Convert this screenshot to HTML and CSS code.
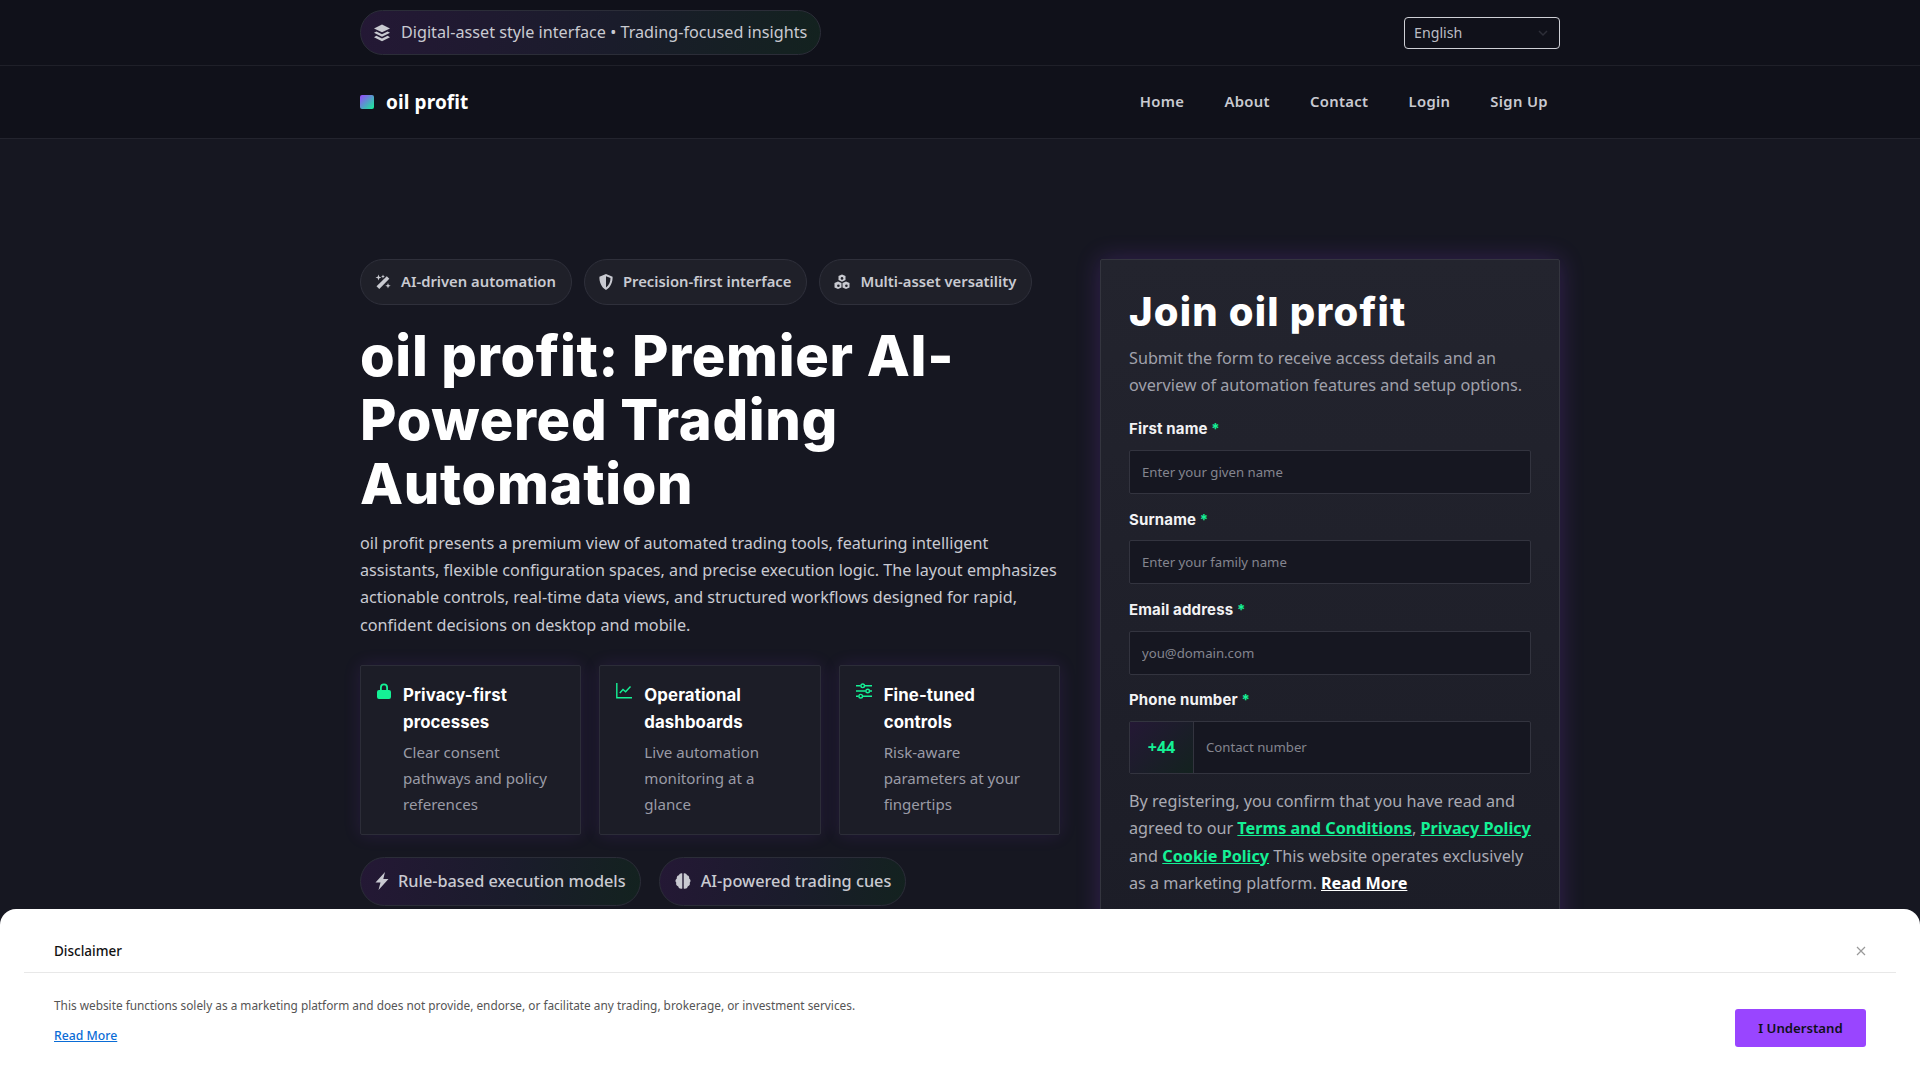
FILE: index.html
```html
<!DOCTYPE html>
<html lang="en">
<head>
<meta charset="utf-8">
<title>oil profit</title>
<link rel="stylesheet" href="styles.css">
</head>
<body>
<header class="topbar">
  <div class="wrap topbar-row">
    <div class="pill pill-top">
      <svg class="ico ico-layers" viewBox="0 0 18 18"><path d="M9 .5 17 4.400 9 8.300 1 4.400Z"/><path d="M3.400 7.400 9 10.200 14.600 7.400 17 8.800 9 12.700 1 8.800Z"/><path d="M3.400 11.800 9 14.500 14.600 11.800 17 13.200 9 17.200 1 13.200Z"/></svg>
      <span>Digital-asset style interface • Trading-focused insights</span>
    </div>
    <div class="lang">
      <span>English</span>
      <svg class="lang-caret" viewBox="0 0 12 12"><path d="M2 4l4 4 4-4"/></svg>
    </div>
  </div>
</header>
<nav class="navbar">
  <div class="wrap nav-row">
    <a class="brand"><span class="brand-mark"></span><span>oil profit</span></a>
    <div class="nav-links">
      <a>Home</a><a>About</a><a>Contact</a><a>Login</a><a>Sign Up</a>
    </div>
  </div>
</nav>
<main class="wrap hero">
  <section class="left">
    <div class="chips">
      <span class="chip"><svg class="ico" viewBox="0 0 16 16"><path d="M11.800 2.200 14.300 4.700 4.300 15 1.500 12.300Z"/><path d="M3.500.5 4.300 2.700 6.500 3.500 4.300 4.300 3.500 6.500 2.700 4.300.5 3.500 2.700 2.700Z"/><path d="M8 .5 8.600 1.900 10 2.500 8.600 3.100 8 4.500 7.400 3.100 6 2.500 7.400 1.900Z"/><path d="M13 9 13.700 11 15.700 11.700 13.700 12.400 13 14.400 12.300 12.400 10.300 11.700 12.300 11Z"/></svg>AI-driven automation</span>
      <span class="chip"><svg class="ico ico-shield" viewBox="0 0 14 16"><path fill-rule="evenodd" d="M7 0 13.600 2.700C13.800 7.500 12 13 7 16 2 13 .2 7.500.4 2.700ZM7 2.300V13.500C10.200 11.500 11.500 7.800 11.500 4.100Z"/></svg>Precision-first interface</span>
      <span class="chip"><svg class="ico" viewBox="0 0 16 16"><path d="M8 .5 11.500 2V6L8 7.700 4.500 6V2Z"/><path d="M4 7.600 7.500 9.100V13.400L4 15 .5 13.400V9.100Z"/><path d="M12 7.600 15.500 9.100V13.400L12 15 8.500 13.400V9.100Z"/><circle cx="8" cy="4.400" r="1.300" fill="#1f2029"/><circle cx="4.400" cy="11.800" r="1.300" fill="#1f2029"/><circle cx="12.400" cy="11.800" r="1.300" fill="#1f2029"/></svg>Multi-asset versatility</span>
    </div>
    <h1>oil profit: Premier AI-Powered Trading Automation</h1>
    <p class="lead">oil profit presents a premium view of automated trading tools, featuring intelligent assistants, flexible configuration spaces, and precise execution logic. The layout emphasizes actionable controls, real-time data views, and structured workflows designed for rapid, confident decisions on desktop and mobile.</p>
    <div class="features">
      <article class="feature">
        <svg class="f-ico f-lock" viewBox="0 0 14 16"><path class="solid" d="M3 7V4.500a4 4 0 0 1 8 0V7h1a2 2 0 0 1 2 2v5a2 2 0 0 1-2 2H2a2 2 0 0 1-2-2V9a2 2 0 0 1 2-2ZM4.800 7h4.400V4.500a2.200 2.200 0 0 0-4.400 0Z"/></svg>
        <div><h3>Privacy-first processes</h3><p>Clear consent pathways and policy references</p></div>
      </article>
      <article class="feature">
        <svg class="f-ico" viewBox="0 0 16 16"><path class="line" d="M.8 0v14.700H16M3.800 10l3.200-3.500 2.600 2.200L14.500 3.500"/></svg>
        <div><h3>Operational dashboards</h3><p>Live automation monitoring at a glance</p></div>
      </article>
      <article class="feature">
        <svg class="f-ico" viewBox="0 0 16 16"><path class="line" d="M0 2.800h4.500M9 2.800h7M0 8h9.500M14 8h2M0 13.200h2.500M7 13.200h9"/><circle class="line" cx="6.700" cy="2.800" r="1.800"/><circle class="line" cx="11.700" cy="8" r="1.800"/><circle class="line" cx="4.700" cy="13.200" r="1.800"/></svg>
        <div><h3>Fine-tuned controls</h3><p>Risk-aware parameters at your fingertips</p></div>
      </article>
    </div>
    <div class="chips chips-low">
      <span class="pill pill-low"><svg class="ico ico-bolt" viewBox="0 0 14 18"><path d="M10 0 .5 10.500H5.500L3.500 18 13.500 7H8.300Z"/></svg>Rule-based execution models</span>
      <span class="pill pill-low"><svg class="ico ico-brain" viewBox="0 0 18 18"><path d="M8.300 1.500V16.500C6.500 17.200 4.600 16.300 4.300 14.500 2.500 14 1.700 12.300 2.300 10.800 1 9.500 1.200 7.300 2.800 6.400 2.500 4.800 3.500 3.300 5 3.200 5.500 1.700 7 1 8.300 1.500Z"/><path d="M9.700 1.500V16.500C11.500 17.200 13.400 16.300 13.700 14.500 15.500 14 16.300 12.300 15.700 10.800 17 9.500 16.800 7.300 15.200 6.400 15.500 4.800 14.500 3.300 13 3.200 12.500 1.700 11 1 9.700 1.500Z"/></svg>AI-powered trading cues</span>
    </div>
  </section>
  <aside class="panel">
    <h2>Join oil profit</h2>
    <p class="panel-sub">Submit the form to receive access details and an overview of automation features and setup options.</p>
    <form class="form">
      <label class="field"><span class="label">First name <em>*</em></span><input class="input" placeholder="Enter your given name"></label>
      <label class="field"><span class="label">Surname <em>*</em></span><input class="input" placeholder="Enter your family name"></label>
      <label class="field"><span class="label">Email address <em>*</em></span><input class="input" placeholder="you@domain.com"></label>
      <label class="field"><span class="label">Phone number <em>*</em></span>
        <span class="phone"><span class="prefix">+44</span><input class="input input-phone" placeholder="Contact number"></span>
      </label>
      <p class="consent">By registering, you confirm that you have read and agreed to our <a>Terms and Conditions</a>, <a>Privacy Policy</a> and <a>Cookie Policy</a> This website operates exclusively as a marketing platform. <a class="more">Read More</a></p>
    </form>
  </aside>
</main>
<div class="modal">
  <div class="modal-head"><span class="modal-title">Disclaimer</span><svg class="modal-x" viewBox="0 0 10 10"><path d="M1 1l8 8M9 1l-8 8"/></svg></div>
  <div class="modal-body">
    <div class="modal-text">
      <p>This website functions solely as a marketing platform and does not provide, endorse, or facilitate any trading, brokerage, or investment services.</p>
      <a>Read More</a>
    </div>
    <button class="modal-btn" type="button">I Understand</button>
  </div>
</div>
</body>
</html>
```
FILE: styles.css
```css
* { box-sizing: border-box; }
html, body { margin: 0; height: 100%; overflow: hidden; }
body { background: #161721; color: #c9cad1; font-family: "Noto Sans", sans-serif; font-size: 16.200px; }
a { cursor: pointer; }
.wrap { width: 1200px; margin: 0 auto; }

.topbar { height: 66px; background: #10111a; border-bottom: 1px solid #1f2029; }
.topbar-row { height: 65px; display: flex; align-items: center; justify-content: space-between; }
.pill { display: inline-flex; align-items: center; border: 1px solid #2b2d38; border-radius: 999px; background: linear-gradient(100deg, #241835, #1a1c2b 55%, #13221f); color: #c9cad1; }
.pill-top { height: 45px; padding: 0 13px 2px 12px; gap: 10px; font-size: 16.200px; }
.pill-top .ico { margin-top: 2px; }
.ico { width: 16px; height: 16px; fill: #c9cad1; flex: none; }
.ico-layers { width: 18px; height: 18px; }
.lang { width: 156px; height: 32px; display: flex; align-items: center; justify-content: space-between; padding: 0 10px 0 9px; border: 1px solid #cfd0d6; border-radius: 4px; font-size: 14.200px; color: #bcbdc5; background: #10111a; }
.lang-caret { width: 12px; height: 12px; fill: none; stroke: #2d2e38; stroke-width: 1.500; }

.navbar { height: 73px; background: #10111a; border-bottom: 1px solid #23242e; }
.nav-row { height: 72px; display: flex; align-items: center; justify-content: space-between; }
.brand { display: flex; align-items: center; gap: 12px; color: #fff; font-size: 19px; font-weight: 700; letter-spacing: .1px; }
.brand-mark { width: 14px; height: 14px; border-radius: 2px; background: linear-gradient(135deg, #9945ff, #14f195); }
.nav-links { display: flex; gap: 16px; margin-top: -2px; }
.nav-links a { padding: 8px 12px; font-size: 14.800px; font-weight: 600; letter-spacing: .35px; color: #c9cad1; }

.hero { display: grid; grid-template-columns: 700px 460px; gap: 40px; padding-top: 120px; }
.chips { display: flex; gap: 12px; }
.chip { display: inline-flex; align-items: center; gap: 10px; height: 46px; padding: 0 15px 2px 14px; border: 1px solid #2f303b; border-radius: 999px; background: #1f2029; color: #c9cad1; font-size: 14.800px; font-weight: 600; }
.chip .ico { margin-top: 2px; }
.ico-shield { width: 14px; }
h1 { margin: 19px 0 14px; font-family: Inter, sans-serif; font-size: 56px; line-height: 64px; font-weight: 800; color: #fff; letter-spacing: .68px; }
.lead { margin: 0; font-size: 16.200px; line-height: 27.200px; color: #c9cad1; }
.features { margin-top: 26px; display: grid; grid-template-columns: repeat(3, 1fr); gap: 18px; }
.feature { display: flex; gap: 12px; height: 170px; padding: 16px; border: 1px solid #2c2d38; border-radius: 2px; background: #1c1d27; box-shadow: 0 0 18px rgba(153, 69, 255, .12); }
.f-ico { width: 16px; height: 16px; flex: none; margin-top: 1px; }
.f-lock { width: 14px; }
.f-ico .solid { fill: #14f195; fill-rule: evenodd; }
.f-ico .line { fill: none; stroke: #14f195; stroke-width: 1.400; }
.feature h3 { margin: 0 0 3px; font-family: Inter, sans-serif; font-size: 16.800px; line-height: 27px; font-weight: 700; color: #fff; letter-spacing: .1px; }
.feature p { margin: 0; font-size: 15.100px; line-height: 26px; color: #9a9ba6; }
.chips-low { margin-top: 22px; gap: 18px; }
.pill-low { height: 49px; padding: 0 14px; gap: 9px; font-size: 16.300px; font-weight: 500; }
.ico-bolt { width: 14px; height: 18px; }
.ico-brain { width: 18px; height: 18px; }

.panel { height: 760px; padding: 28px; border: 1px solid #34353f; border-radius: 2px; background: linear-gradient(180deg, #23242e, #1b1c26); box-shadow: 0 0 24px rgba(153, 69, 255, .22); }
h2 { margin: 0; font-family: Inter, sans-serif; font-size: 40px; line-height: 48px; font-weight: 800; color: #fff; letter-spacing: 1.200px; }
.panel-sub { margin: 9px 0 0; font-size: 16.200px; line-height: 27px; color: #a0a1ab; }
.form { margin-top: 19.400px; display: flex; flex-direction: column; gap: 14.730px; }
.field { display: flex; flex-direction: column; gap: 9.600px; }
.label { font-family: Inter, sans-serif; font-size: 15px; line-height: 22px; font-weight: 700; color: #f2f2f4; letter-spacing: .15px; }
.label em { font-style: normal; color: #14f195; }
.input { width: 100%; height: 44px; padding: 0 12px; border: 1px solid #33343f; border-radius: 2px; background: #161721; color: #fff; font-family: "Noto Sans", sans-serif; font-size: 13.200px; outline: none; }
.input::placeholder { color: #84858f; opacity: 1; }
.phone { display: flex; height: 53px; border: 1px solid #33343f; border-radius: 2px; background: #161721; }
.prefix { width: 64px; display: flex; align-items: center; justify-content: center; border-right: 1px solid #33343f; background: linear-gradient(135deg, #241835, #13221f); color: #14f195; font-size: 16px; font-weight: 700; }
.input-phone { flex: 1; height: 100%; border: 0; background: transparent; }
.consent { margin: -.4px 0 0; font-size: 16.200px; line-height: 27.200px; color: #a9aab3; }
.consent a { color: #14f195; font-weight: 700; text-decoration: underline; }
.consent a.more { color: #fff; }

.modal { position: fixed; left: 0; right: 0; bottom: 0; height: 171px; padding: 0 24px; background: #fff; border-radius: 16px 16px 0 0; color: #222; }
.modal-head { height: 64px; padding: 20px 30px 0; display: flex; align-items: center; justify-content: space-between; border-bottom: 1px solid #e8e8e8; }
.modal-title { font-size: 13.500px; font-weight: 500; color: #111; }
.modal-x { width: 10px; height: 10px; fill: none; stroke: #999; stroke-width: 1.200; }
.modal-body { display: flex; justify-content: space-between; align-items: flex-start; padding: 23px 30px 0; }
.modal-text p { margin: 0 0 9px; font-size: 11.830px; line-height: 18px; color: #555; }
.modal-text a { font-size: 12.250px; font-weight: 500; color: #0a6cd6; text-decoration: underline; }
.modal-btn { width: 131px; height: 38px; margin-top: 13px; border: 0; border-radius: 3px; background: #9945ff; color: #10111a; font-family: "Noto Sans", sans-serif; font-size: 13.200px; font-weight: 600; }
```
